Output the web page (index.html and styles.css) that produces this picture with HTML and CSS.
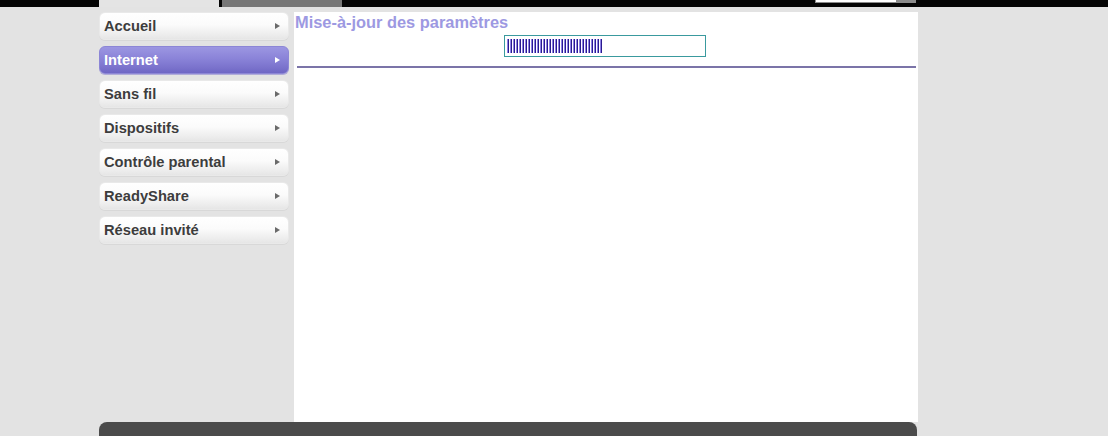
FILE: index.html
```html
<!DOCTYPE html>
<html lang="fr">
<head>
<meta charset="utf-8">
<title>Mise-à-jour des paramètres</title>
<link rel="stylesheet" href="styles.css">
</head>
<body>
<div class="topbar">
  <div class="tab tab-active"></div>
  <div class="tab tab-other"></div>
  <div class="spacer"></div>
  <div class="search"><div class="search-input"></div><div class="search-btn"></div></div>
</div>
<div class="main">
  <nav class="sidebar">
    <a class="item">Accueil<span class="arrow"></span></a>
    <a class="item selected">Internet<span class="arrow"></span></a>
    <a class="item">Sans fil<span class="arrow"></span></a>
    <a class="item">Dispositifs<span class="arrow"></span></a>
    <a class="item">Contrôle parental<span class="arrow"></span></a>
    <a class="item">ReadyShare<span class="arrow"></span></a>
    <a class="item">Réseau invité<span class="arrow"></span></a>
  </nav>
  <section class="content">
    <h1 class="title">Mise-à-jour des paramètres</h1>
    <div class="progress-row">
      <div class="progress"><div class="progress-fill"></div></div>
    </div>
    <div class="rule"></div>
  </section>
</div>
<div class="footer"></div>
</body>
</html>
```
FILE: styles.css
```css
html, body {
  margin: 0;
  padding: 0;
}
body {
  background: #e3e3e3;
  font-family: "Liberation Sans", Arial, sans-serif;
  width: 1108px;
  height: 436px;
  overflow: hidden;
}
.topbar {
  height: 7px;
  background: #050505;
  display: flex;
  padding-left: 99px;
}
.tab {
  width: 120px;
  height: 7px;
}
.tab-active {
  background: #e4e4e4;
  margin-right: 3px;
}
.tab-other {
  background: #777777;
}
.spacer {
  flex: 1;
}
.search {
  display: flex;
  margin-right: 192px;
  height: 3px;
}
.search-input {
  width: 80px;
  background: #fff;
  border: 1px solid #8a8a8a;
  border-top: none;
  height: 2px;
}
.search-btn {
  width: 19px;
  background: #8b8b8b;
}
.main {
  display: flex;
  margin-top: 5px;
  margin-left: 99px;
  gap: 5px;
  height: 410px;
}
.sidebar {
  width: 190px;
  display: flex;
  flex-direction: column;
  gap: 6px;
}
.item {
  height: 28px;
  box-sizing: border-box;
  border-radius: 6px;
  background: linear-gradient(#ffffff 0%, #fbfbfb 45%, #eeeeee 80%, #e6e6e6 100%);
  border: 1px solid #e9e9e9;
  box-shadow: 0 1px 0 #d8d8d8;
  display: flex;
  align-items: center;
  padding-left: 4px;
  padding-right: 8px;
  font-weight: bold;
  font-size: 14.7px;
  color: #3d3d3d;
  position: relative;
}
.item.selected {
  background: linear-gradient(#9c96e2 0%, #8a83d8 45%, #7a72cc 80%, #6e66c4 100%);
  border-color: #8c86d6;
  color: #ffffff;
  box-shadow: 0 1px 0 #b0acd8;
}
.arrow {
  margin-left: auto;
  width: 0;
  height: 0;
  border-top: 3px solid transparent;
  border-bottom: 3px solid transparent;
  border-left: 5px solid #6a6a6a;
}
.item.selected .arrow {
  border-left-color: #ffffff;
}
.content {
  width: 624px;
  background: #ffffff;
  display: flex;
  flex-direction: column;
}
.title {
  margin: 2px 0 0 1px;
  font-size: 16.4px;
  font-weight: bold;
  color: #9d99e2;
  line-height: 16px;
}
.progress-row {
  display: flex;
  justify-content: flex-start;
  padding-left: 210px;
  margin-top: 5px;
}
.progress {
  width: 202px;
  height: 22px;
  box-sizing: border-box;
  border: 1px solid #3a9a9e;
  padding: 3px 2px;
  display: flex;
}
.progress-fill {
  width: 96px;
  height: 14px;
  background: repeating-linear-gradient(90deg, #8f82e6 0 1px, #2a1b8e 1px 2px, #ffffff 2px 3px);
}
.rule {
  margin: 9px 2px 0 3px;
  height: 2px;
  background: #7b74a8;
}
.footer {
  margin: 0 191px 0 99px;
  height: 30px;
  background: #4b4b4b;
  border-radius: 8px 8px 0 0;
}
```
